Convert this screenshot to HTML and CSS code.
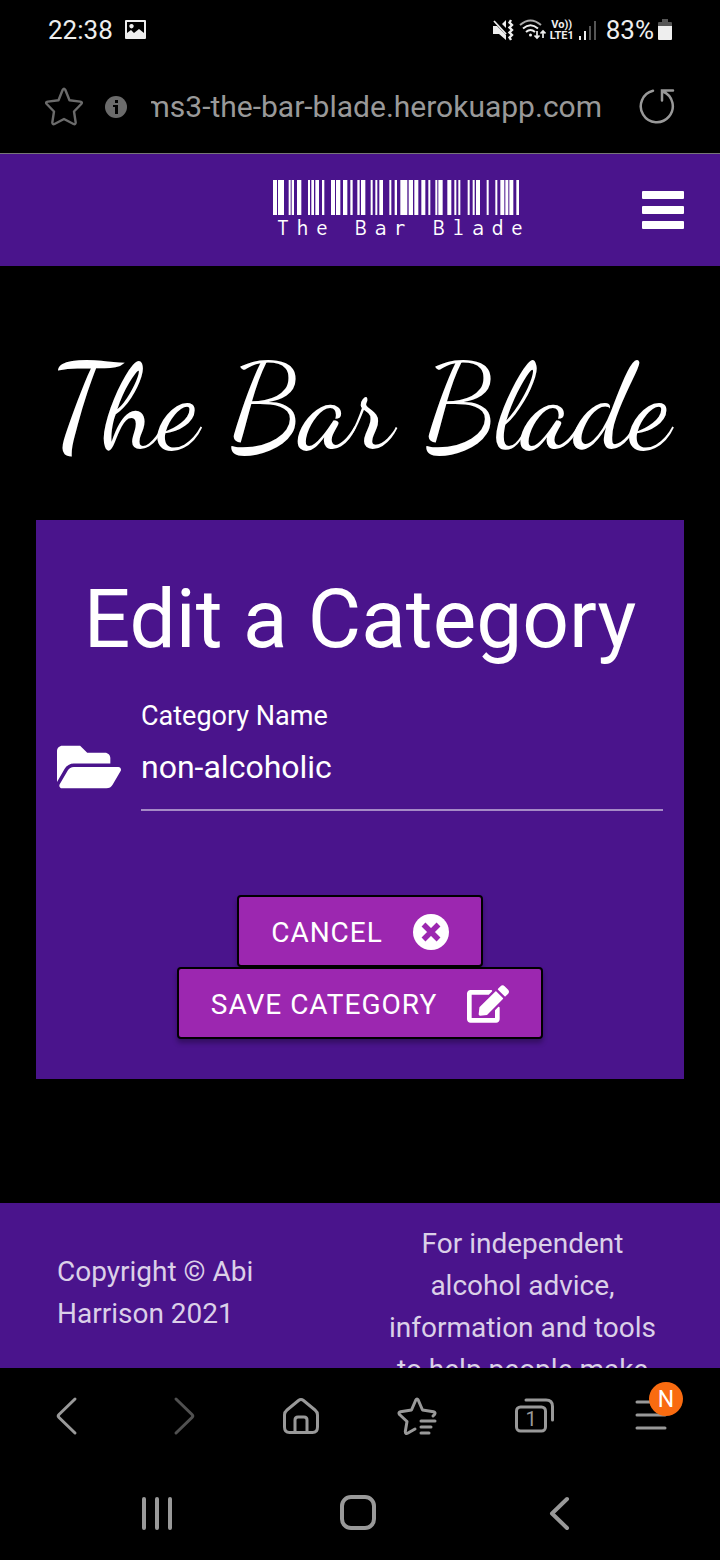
FILE: index.html
```html
<!DOCTYPE html>
<html lang="en">
<head>
<meta charset="utf-8">
<meta name="viewport" content="width=device-width, initial-scale=1">
<title>The Bar Blade - Edit a Category</title>
<link rel="stylesheet" href="styles.css">
</head>
<body>
<div class="status-bar">
  <span class="time">22:38</span>
  <svg width="22" height="20" viewBox="0 0 22 20"><path fill="#eee" fill-rule="evenodd" d="M1 0h19q1 0 1 1v17q0 1-1 1H1q-1 0-1-1V1q0-1 1-1zM2 2v11l4-3 3 3 5-4 5 4V2zM6.500 4a2.200 2.200 0 1 0 .01 0z"/></svg>
  <div class="status-icons">
    <svg width="22" height="22" viewBox="0 0 22 22" fill="none" stroke="#eee"><path fill="#eee" stroke="none" d="M0 7h4l9 9v5l-7-6H0zM9 5l4-4v8z"/><path stroke-width="1.800" d="M1 2l12 13"/><path stroke-width="2.400" d="M18 1l-1.500 2.500 2.500 2.500-2.500 2.500 2.500 2.500-2.500 2.500 2.500 2.500-2.500 2.500L18 21"/></svg>
    <svg class="wifi" width="27" height="22" viewBox="0 0 27 22" fill="none" stroke="#eee" stroke-width="2"><path stroke="#aaa" d="M1 6q10.500-9 21 0"/><path d="M4 9.500q7.500-6.500 15 0M7 13q4.500-4 9 0"/><circle cx="11.500" cy="16" r="1.500" fill="#eee" stroke="none"/><path stroke-width="1.700" d="M18 12v7m-2.500-2.500L18 19l2.500-2.500M24 19v-7m-2.500 2.500L24 12l2.500 2.500"/></svg>
    <span class="volte"><span>Vo))</span><span>LTE1</span></span>
    <svg width="20" height="22" viewBox="0 0 20 22"><path fill="#eee" d="M1 17h2v4H1zM6 12h2v9H6z"/><path fill="#555" d="M11 7h2v14h-2zM16 2h2v19h-2z"/></svg>
    <span class="percent">83%</span>
    <svg width="14" height="22" viewBox="0 0 14 22"><path fill="#555" d="M4 0h6v3h3q1 0 1 1v4H0V4q0-1 1-1h3z"/><path fill="#eee" d="M0 7h14v13q0 1-1 1H1q-1 0-1-1z"/></svg>
  </div>
</div>
<div class="address-bar">
  <button class="bare" aria-label="Bookmark"><svg width="40" height="40" viewBox="0 0 40 40"><path fill="none" stroke="#6b6b6b" stroke-width="2.400" stroke-linejoin="round" d="M18.700 2.800Q20 .8 21.300 2.800L25.500 13.300 36.200 14.600Q39 15.200 37.300 17L30 24.500 31.700 35.500Q31.500 38 29.500 37L20 32 10.500 37Q8.500 38 8.300 35.500L10 24.500 2.700 17Q1 15.200 3.800 14.600L14.500 13.300z"/></svg></button>
  <svg class="info" width="22" height="22" viewBox="0 0 22 22"><circle cx="11" cy="11" r="11" fill="#6b6b6b"/><path fill="#000" d="M10 4h3v3h-3zM8 9h5v9h-3v-7H8z"/></svg>
  <div class="url"><span>ms3-the-bar-blade.herokuapp.com</span></div>
  <button class="bare" aria-label="Reload"><svg width="38" height="38" viewBox="0 0 38 38"><path fill="none" stroke="#999" stroke-width="2.500" stroke-linecap="round" d="M15 2.700A16 16 0 1 0 25 3.500M35 2.500H24v10"/></svg></button>
</div>
<div class="viewport">
  <header class="site-header">
    <a class="logo" href="#">
      <svg class="barcode" viewBox="42 0 738 105"><path stroke="#fff" stroke-width="105" fill="none" d="M42 52.500h12m3 0h18m14 0h6m3 0h7m9 0h13m20 0h6m4 0h8m4 0h11m9 0h7m20 0h12m3 0h13m8 0h13m9 0h7m14 0h7m4 0h13m16 0h6m8 0h6m6 0h11m19 0h6m10 0h7m10 0h21m4 0h13m4 0h12m9 0h12m9 0h6m15 0h6m3 0h13m14 0h12m9 0h6m6 0h6m22 0h6m9 0h6m4 0h12m20 0h6m20 0h6m9 0h12m3 0h9m3 0h12m9 0h8"/></svg>
      <span>The Bar Blade</span>
    </a>
    <button class="bare menu" aria-label="Menu"><svg width="42" height="38" viewBox="0 0 42 38"><path fill="#fff" d="M1 0h40q1 0 1 1v6q0 1-1 1H1Q0 8 0 7V1q0-1 1-1zm0 15h40q1 0 1 1v6q0 1-1 1H1q-1 0-1-1v-6q0-1 1-1zm0 15h40q1 0 1 1v6q0 1-1 1H1q-1 0-1-1v-6q0-1 1-1z"/></svg></button>
  </header>
  <main>
    <h1>The Bar Blade</h1>
    <form class="card">
      <h2>Edit a Category</h2>
      <div class="field">
        <svg width="64" height="64" viewBox="0 0 576 512"><path fill="#fff" d="M572.694 292.093L500.270 416.248A63.997 63.997 0 0 1 444.989 448H45.025c-18.523 0-30.064-20.093-20.731-36.093l72.424-124.155A64 64 0 0 1 152 256h399.964c18.523 0 30.064 20.093 20.730 36.093zM152 224h328v-48c0-26.510-21.490-48-48-48H272l-64-64H48C21.490 64 0 85.490 0 112v278.046l69.077-118.418C86.214 242.250 117.989 224 152 224z"/></svg>
        <div class="entry">
          <label for="category">Category Name</label>
          <input id="category" type="text" value="non-alcoholic">
        </div>
      </div>
      <div class="actions">
        <button type="button">CANCEL<svg width="36" height="36" viewBox="0 0 36 36"><circle cx="18" cy="18" r="18" fill="#fff"/><path stroke="#9c27b0" stroke-width="5.500" d="M10.500 10.500l15 15m0-15l-15 15"/></svg></button>
        <button type="submit">SAVE CATEGORY<svg width="42" height="38" viewBox="0 0 576 512"><path fill="#fff" d="M402.600 83.200l90.200 90.200c3.800 3.800 3.800 10 0 13.800L274.400 405.600l-92.800 10.300c-12.400 1.400-22.900-9.100-21.500-21.500l10.300-92.800L388.800 83.200c3.800-3.800 10-3.800 13.800 0zm162-22.900l-48.800-48.800c-15.200-15.200-39.900-15.200-55.200 0l-35.400 35.400c-3.800 3.800-3.800 10 0 13.800l90.200 90.200c3.800 3.800 10 3.800 13.800 0l35.400-35.400c15.200-15.300 15.200-40 0-55.200zM384 346.200V448H64V128h229.800c3.200 0 6.200-1.300 8.500-3.500l40-40c7.600-7.600 2.200-20.500-8.500-20.500H48C21.500 64 0 85.500 0 112v352c0 26.500 21.500 48 48 48h352c26.500 0 48-21.500 48-48V306.200c0-10.700-12.900-16-20.500-8.500l-40 40c-2.200 2.300-3.500 5.300-3.500 8.500z"/></svg></button>
      </div>
    </form>
  </main>
  <footer>
    <p class="copyright">Copyright © Abi Harrison 2021</p>
    <p class="advice">For independent alcohol advice, information and tools to help people make better choices</p>
  </footer>
</div>
<nav class="toolbar" aria-label="Browser">
  <button class="bare" aria-label="Back"><svg width="40" height="40" viewBox="0 0 40 40"><path d="M28 3L12 18.500q-1.500 1.500 0 3L28 37"/></svg></button>
  <button class="bare dim" aria-label="Forward"><svg width="40" height="40" viewBox="0 0 40 40"><path d="M12 3l16 15.500q1.500 1.500 0 3L12 37"/></svg></button>
  <button class="bare" aria-label="Home"><svg width="40" height="40" viewBox="0 0 40 40"><path d="M17.500 4.500q2.500-2 5 0L34 14q2.500 2 2.500 5v12q0 5.500-5 5.500h-23q-5 0-5-5.500V19q0-3 2.500-5zM14 36V24q0-3 3-3h6q3 0 3 3v12"/></svg></button>
  <button class="bare" aria-label="Bookmarks"><svg width="40" height="40" viewBox="0 0 40 40"><path d="M36 20l1.500-1.500q1.500-2-1-2.700L25.500 14 21.200 4Q20 1.800 18.800 4L14.500 14 3.500 15.800Q1 16.500 2.500 18.500L10 25.500 8.300 35.500Q8.300 38.500 11 37L18 33M24 25h14M24 31h10M24 37h8"/></svg></button>
  <button class="bare tabs" aria-label="Tabs"><svg width="40" height="40" viewBox="0 0 40 40"><path d="M12 4h20q6.500 0 6.500 6.500V24"/><rect x="2.500" y="11" width="29" height="24" rx="4"/></svg><span>1</span></button>
  <button class="bare more" aria-label="More"><svg width="40" height="40" viewBox="0 0 40 40"><path d="M6 6h28M6 19h28M6 32h28"/></svg><span class="badge">N</span></button>
</nav>
<nav class="system-nav" aria-label="System">
  <button class="bare" aria-label="Recents"><svg width="40" height="40" viewBox="0 0 40 40"><path d="M7 6v29M20 6v29M33 6v29"/></svg></button>
  <button class="bare" aria-label="Home screen"><svg width="40" height="40" viewBox="0 0 40 40"><rect x="4" y="4" width="32" height="31" rx="9"/></svg></button>
  <button class="bare" aria-label="Go back"><svg width="40" height="40" viewBox="0 0 40 40"><path d="M28 6L13 20.500 28 35"/></svg></button>
</nav>
</body>
</html>
```
FILE: styles.css
```css
* { box-sizing: border-box; }
body {
  display: flex;
  flex-direction: column;
  height: 100vh;
  margin: 0;
  overflow: hidden;
  background: #000;
  color: #fff;
  font-family: Roboto, "Liberation Sans", sans-serif;
}
h1, h2, p { margin: 0; font-weight: 400; }
svg { display: block; flex: none; }
.bare {
  padding: 0;
  border: 0;
  background: none;
  color: inherit;
  font: inherit;
}
.status-bar {
  display: flex;
  flex: none;
  align-items: center;
  gap: 12px;
  height: 60px;
  padding: 0 48px;
  color: #eee;
  font-size: 26px;
}
.status-icons {
  display: flex;
  align-items: center;
  gap: 4px;
  margin-left: auto;
}
.volte {
  display: flex;
  flex-direction: column;
  align-items: center;
  font-size: 11px;
  font-weight: 700;
  line-height: 11px;
}
.percent { margin-left: 4px; }
.address-bar {
  display: flex;
  flex: none;
  align-items: center;
  height: 94px;
  padding: 0 44px;
  border-bottom: 1px solid #777;
  color: #999;
  font-size: 30px;
}
.info { margin: 0 24px 0 21px; }
.url {
  display: flex;
  flex: 1;
  justify-content: flex-end;
  margin-right: 36px;
  overflow: hidden;
  white-space: nowrap;
}
.viewport {
  flex: 1;
  min-height: 0;
  overflow: hidden;
}
.site-header {
  display: grid;
  grid-template-columns: 1fr auto 1fr;
  align-items: center;
  height: 112px;
  padding: 0 36px 0 120px;
  background: #4a148c;
}
.logo {
  display: flex;
  flex-direction: column;
  grid-column: 2;
  color: #fff;
  font-family: Inconsolata, "DejaVu Sans Mono", monospace;
  font-size: 23px;
  letter-spacing: 8px;
  line-height: 25px;
  text-decoration: none;
}
.logo span { padding-left: 4px; }
.barcode { width: 246px; height: 35px; }
.menu { justify-self: end; }
h1 {
  padding: 82px 0 52px;
  font-family: "Dancing Script", "Liberation Serif", serif;
  font-size: 118px;
  line-height: 120px;
  text-align: center;
  white-space: nowrap;
}
.card {
  margin: 0 36px 124px;
  padding: 49px 21px 40px;
  background: #4a148c;
}
h2 {
  font-size: 82px;
  line-height: 100px;
  text-align: center;
}
.field {
  display: flex;
  align-items: center;
  gap: 20px;
  margin-top: 27px;
}
.field svg { margin-top: 26px; }
.entry {
  display: flex;
  flex: 1;
  flex-direction: column;
}
label { font-size: 27px; line-height: 40px; }
.entry input {
  width: 100%;
  height: 75px;
  padding: 0 0 12px;
  border: 0;
  border-bottom: 2px solid #a58ac6;
  border-radius: 0;
  outline: 0;
  background: none;
  color: #fff;
  font: 32px Roboto, sans-serif;
}
.actions {
  display: flex;
  flex-direction: column;
  align-items: center;
  margin-top: 84px;
}
.actions button {
  display: flex;
  align-items: center;
  gap: 30px;
  height: 72px;
  padding: 2px 32px 0;
  border: 2px solid #000;
  border-radius: 4px;
  background: #9c27b0;
  box-shadow: 0 4px 5px rgba(0, 0, 0, .3);
  color: #fff;
  font: 28px Roboto, sans-serif;
  letter-spacing: 1px;
}
footer {
  display: grid;
  grid-template-columns: 1fr 1fr;
  padding: 20px 57px;
  background: #4a148c;
  color: #dbd0e8;
  font-size: 28px;
  line-height: 42px;
}
.copyright { padding: 28px 80px 0 0; }
.advice { padding: 0 2px 0 24px; text-align: center; }
.toolbar, .system-nav {
  display: flex;
  flex: none;
  fill: none;
  stroke: #999;
  stroke-linecap: round;
  stroke-linejoin: round;
}
.toolbar {
  justify-content: space-between;
  align-items: center;
  height: 98px;
  padding: 0 49px 2px 47px;
  stroke-width: 3;
}
.dim { stroke: #505050; }
.tabs, .more { position: relative; }
.tabs span {
  position: absolute;
  top: 11px;
  left: 2px;
  width: 30px;
  color: #999;
  font-size: 20px;
  line-height: 24px;
}
.badge {
  position: absolute;
  top: -14px;
  right: -12px;
  width: 34px;
  height: 34px;
  border-radius: 50%;
  background: #f96b10;
  color: #fff;
  font-size: 23px;
  line-height: 36px;
}
.system-nav {
  justify-content: space-around;
  align-items: center;
  height: 94px;
  padding: 0 60px 0 56px;
  stroke-width: 4;
}
```
